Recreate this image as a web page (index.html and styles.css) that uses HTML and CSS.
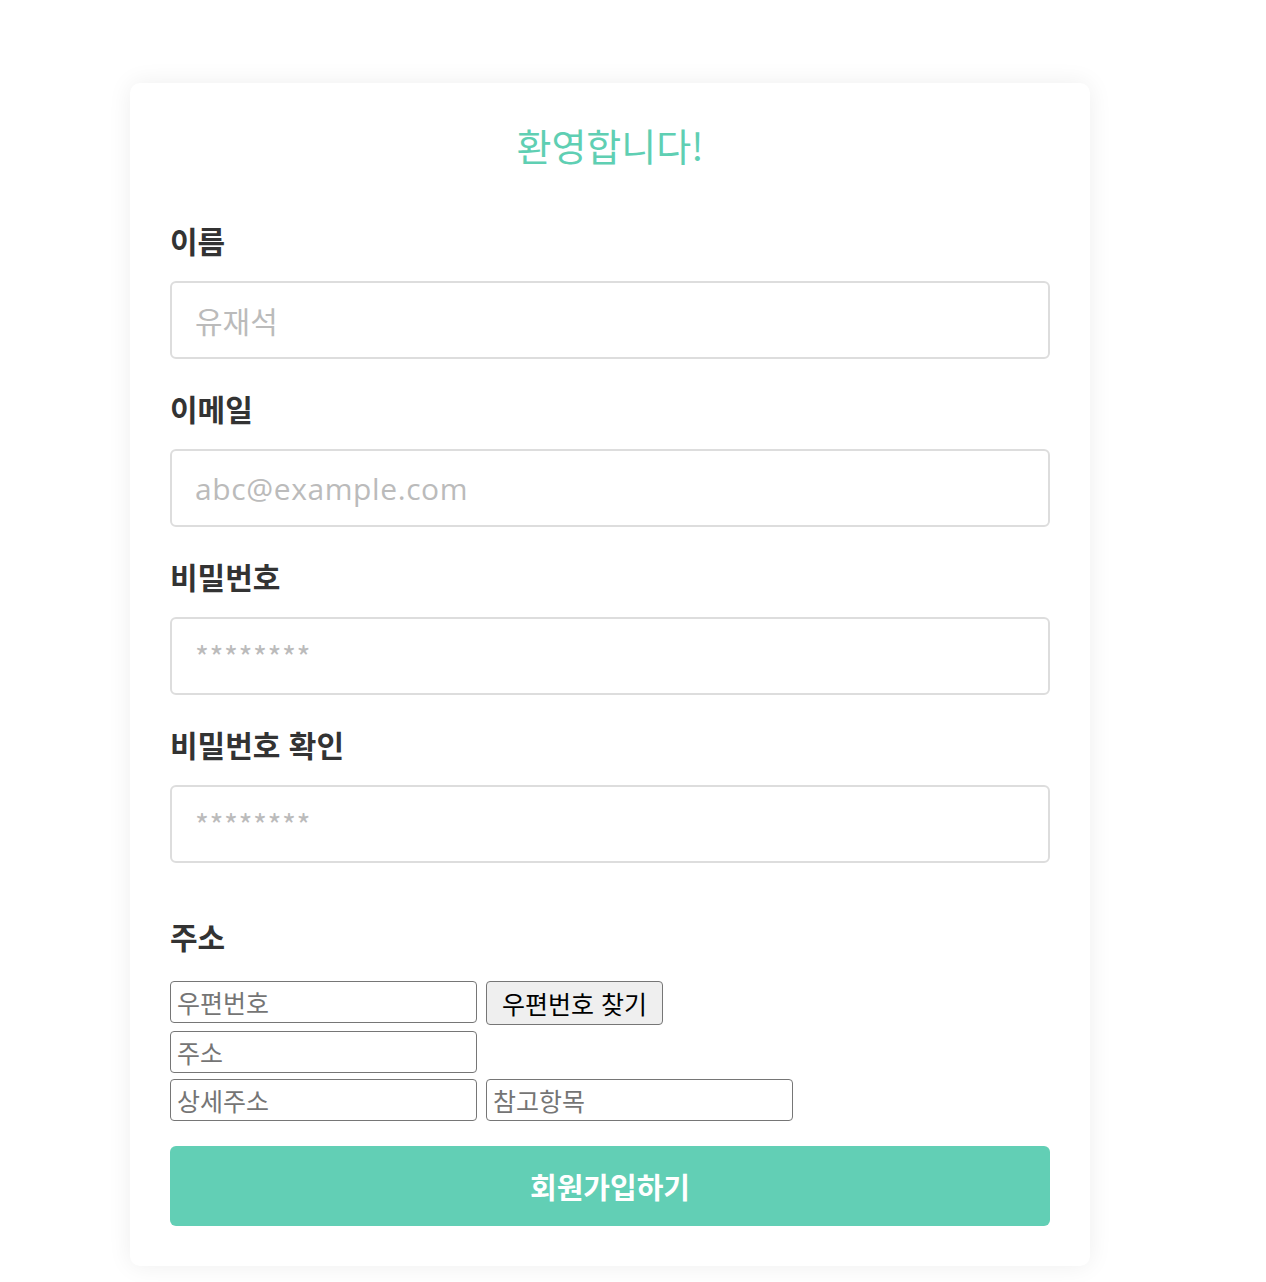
FILE: index.html
```html
<!DOCTYPE html>
<html lang="ko">
<head>
<meta charset="utf-8">
<title>회원가입</title>
<link rel="stylesheet" href="styles.css">
</head>
<body>
<form class="card">
  <h1 class="title">환영합니다!</h1>
  <div class="field">
    <label class="label">이름</label>
    <input class="input" type="text" placeholder="유재석">
  </div>
  <div class="field">
    <label class="label">이메일</label>
    <input class="input input-latin" type="email" placeholder="abc@example.com">
  </div>
  <div class="field">
    <label class="label">비밀번호</label>
    <input class="input input-pw" type="password" placeholder="********">
  </div>
  <div class="field">
    <label class="label">비밀번호 확인</label>
    <input class="input input-pw" type="password" placeholder="********">
  </div>
  <div class="address">
    <label class="label">주소</label>
    <div class="addr-rows">
      <div class="addr-row">
        <input class="small-input" type="text" placeholder="우편번호">
        <button class="small-btn" type="button">우편번호 찾기</button>
      </div>
      <div class="addr-row">
        <input class="small-input" type="text" placeholder="주소">
      </div>
      <div class="addr-row">
        <input class="small-input" type="text" placeholder="상세주소">
        <input class="small-input" type="text" placeholder="참고항목">
      </div>
    </div>
  </div>
  <button class="submit" type="button">회원가입하기</button>
</form>
</body>
</html>
```

FILE: styles.css
```css
html, body {
  margin: 0;
  padding: 0;
  background: #ffffff;
}

body {
  font-family: "Noto Sans CJK KR", "Noto Sans", sans-serif;
  color: #333333;
}

.card {
  box-sizing: border-box;
  width: 960px;
  margin: 83px 0 16px 130px;
  padding: 40px;
  background: #ffffff;
  border-radius: 10px;
  box-shadow: 0 0 24px rgba(0, 0, 0, 0.07);
  display: flex;
  flex-direction: column;
}

.title {
  margin: 0 0 53px;
  font-size: 38px;
  line-height: 44px;
  font-weight: 400;
  text-align: center;
  color: #5fcfb3;
}

.field {
  display: flex;
  flex-direction: column;
  margin-bottom: 29px;
}

.label {
  display: block;
  font-size: 30px;
  line-height: 40px;
  font-weight: 700;
  color: #333333;
  margin-bottom: 21px;
}

.input {
  box-sizing: border-box;
  width: 880px;
  height: 78px;
  padding: 0 23px;
  border: 2px solid #dddddd;
  border-radius: 6px;
  font-family: "Noto Sans CJK KR", sans-serif;
  font-size: 30px;
  color: #333333;
  outline: none;
  background: #ffffff;
}

.input-latin {
  font-family: "Open Sans", "Noto Sans CJK KR", sans-serif;
  letter-spacing: 0.6px;
}

.input-pw {
  font-family: "Noto Sans CJK KR", sans-serif;
  font-size: 30px;
  letter-spacing: 0.5px;
}

.input::placeholder {
  color: #bbbbbb;
}

.address {
  margin-top: 24px;
  display: flex;
  flex-direction: column;
}

.address .label {
  margin-bottom: 25px;
}

.addr-rows {
  display: flex;
  flex-direction: column;
  gap: 6px;
}

.addr-row {
  display: flex;
  align-items: flex-start;
  gap: 9px;
}

.small-input {
  box-sizing: border-box;
  width: 307px;
  height: 42px;
  padding: 0 6px;
  border: 1px solid #767676;
  border-radius: 4px;
  font-family: "Noto Sans CJK KR", sans-serif;
  font-size: 25px;
  color: #000000;
  background: #ffffff;
  outline: none;
}

.small-input::placeholder {
  color: #757575;
}

.small-btn {
  box-sizing: border-box;
  width: 177px;
  height: 44px;
  padding: 0 10px;
  border: 1px solid #767676;
  border-radius: 4px;
  background: #efefef;
  font-family: "Noto Sans CJK KR", sans-serif;
  font-size: 25px;
  color: #000000;
}

.submit {
  margin-top: 25px;
  width: 880px;
  height: 80px;
  border: none;
  border-radius: 6px;
  background: #62cfb5;
  color: #ffffff;
  font-family: "Noto Sans CJK KR", sans-serif;
  font-size: 29px;
  font-weight: 700;
}
```
